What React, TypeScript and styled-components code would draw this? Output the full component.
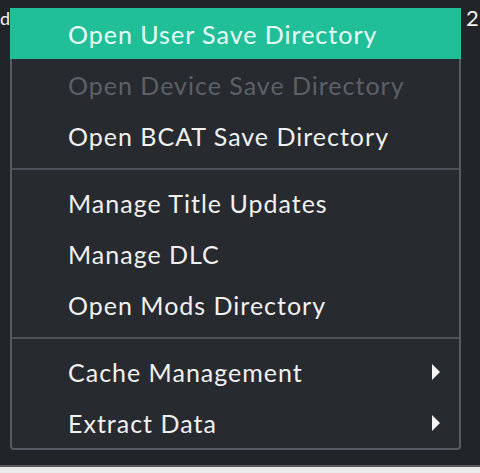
import React from 'react';
import styled, { createGlobalStyle } from 'styled-components';

const GlobalStyle = createGlobalStyle`
  html, body {
    margin: 0;
    padding: 0;
    background: #eaeaea;
  }
  body {
    font-family: Lato, "Noto Sans", sans-serif;
  }
`;

const Screen = styled.div`
  width: 480px;
  height: 473px;
  display: flex;
  flex-direction: column;
  overflow: hidden;
`;

const Backdrop = styled.div`
  background: #212428;
  display: grid;
  grid-template-columns: 10px 451px 1fr;
  align-items: start;
  border-bottom: 2px solid #55595e;
  box-sizing: border-box;
  height: 467px;
`;

const Peek = styled.div<{ $align: 'left' | 'right' }>`
  color: #f2f2f2;
  font-size: ${(p) => (p.$align === 'left' ? '18px' : '22px')};
  line-height: 1;
  padding-top: ${(p) => (p.$align === 'left' ? '9px' : '7px')};
  padding-left: ${(p) => (p.$align === 'right' ? '5px' : '0')};
  white-space: nowrap;
`;

const Menu = styled.div`
  margin-top: 8px;
  background: #272a2f;
  border: 2px solid #555b61;
  border-top: none;
  border-radius: 0 0 4px 4px;
  display: flex;
  flex-direction: column;
`;

const Item = styled.div<{ $active?: boolean; $disabled?: boolean }>`
  height: 51px;
  display: flex;
  align-items: center;
  justify-content: space-between;
  padding: 0 18px 0 56px;
  margin: ${(p) => (p.$active ? '0 -2px' : '0')};
  padding-left: ${(p) => (p.$active ? '58px' : '56px')};
  background: ${(p) => (p.$active ? '#20bf98' : 'transparent')};
  color: ${(p) => (p.$active ? '#eafff8' : p.$disabled ? '#5c6167' : '#f1f1f1')};
  font-size: 25px;
  letter-spacing: 1px;
  white-space: nowrap;
`;

const Divider = styled.div`
  height: 2px;
  margin: 7px 0;
  background: #4b5157;
`;

const Arrow = () => (
  <svg width="10" height="18" viewBox="0 0 10 18">
    <path d="M1 1 L9 9 L1 17 Z" fill="#f4f4f4" />
  </svg>
);

type Entry = { label: string; active?: boolean; disabled?: boolean; sub?: boolean } | 'sep';

const entries: Entry[] = [
  { label: 'Open User Save Directory', active: true },
  { label: 'Open Device Save Directory', disabled: true },
  { label: 'Open BCAT Save Directory' },
  'sep',
  { label: 'Manage Title Updates' },
  { label: 'Manage DLC' },
  { label: 'Open Mods Directory' },
  'sep',
  { label: 'Cache Management', sub: true },
  { label: 'Extract Data', sub: true },
];

export default function App() {
  return (
    <Screen>
      <GlobalStyle />
      <Backdrop>
        <Peek $align="left">d</Peek>
        <Menu>
          {entries.map((e, i) =>
            e === 'sep' ? (
              <Divider key={i} />
            ) : (
              <Item key={i} $active={e.active} $disabled={e.disabled}>
                <span>{e.label}</span>
                {e.sub && <Arrow />}
              </Item>
            )
          )}
        </Menu>
        <Peek $align="right">2</Peek>
      </Backdrop>
    </Screen>
  );
}
